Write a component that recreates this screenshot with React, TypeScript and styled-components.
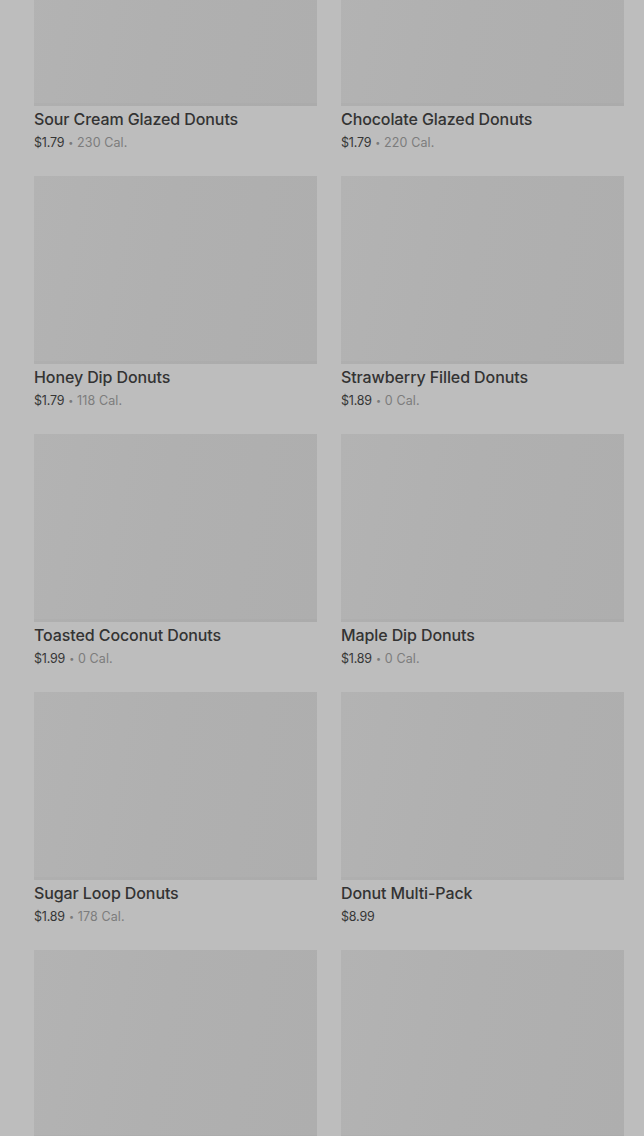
import React, { FC } from 'react';
import styled, { createGlobalStyle } from 'styled-components';

const GlobalStyle = createGlobalStyle`
    html,
    body {
        margin: 0;
        padding: 0;
        background: #bdbdbd;
        overflow: hidden;
    }

    body {
        font-family: Inter, 'Liberation Sans', sans-serif;
        -webkit-font-smoothing: antialiased;
    }
`;

interface Item {
    id: number;
    name?: string;
    price?: string;
    cal?: string;
}

const items: Item[] = [
    { id: 1, name: 'Sour Cream Glazed Donuts', price: '$1.79', cal: '230 Cal.' },
    { id: 2, name: 'Chocolate Glazed Donuts', price: '$1.79', cal: '220 Cal.' },
    { id: 3, name: 'Honey Dip Donuts', price: '$1.79', cal: '118 Cal.' },
    { id: 4, name: 'Strawberry Filled Donuts', price: '$1.89', cal: '0 Cal.' },
    { id: 5, name: 'Toasted Coconut Donuts', price: '$1.99', cal: '0 Cal.' },
    { id: 6, name: 'Maple Dip Donuts', price: '$1.89', cal: '0 Cal.' },
    { id: 7, name: 'Sugar Loop Donuts', price: '$1.89', cal: '178 Cal.' },
    { id: 8, name: 'Donut Multi-Pack', price: '$8.99' },
    { id: 9 },
    { id: 10 },
];

const Page = styled.div`
    height: 1136px;
    overflow: hidden;
    background: #bdbdbd;
`;

const Grid = styled.div`
    display: grid;
    grid-template-columns: 283px 283px;
    column-gap: 24px;
    row-gap: 23px;
    padding: 0 20px 0 34px;
    margin-top: -82px;
`;

const Card = styled.div`
    display: flex;
    flex-direction: column;
`;

const Thumb = styled.div`
    height: 188px;
    background: linear-gradient(100deg, #b3b3b3 0%, #b0b0b0 45%, #aeaeae 100%);
    box-shadow: inset 0 -3px 0 rgba(0, 0, 0, 0.015);
`;

const Title = styled.div`
    margin-top: 3px;
    font-size: 16px;
    line-height: 20px;
    font-weight: 500;
    color: #333333;
    letter-spacing: -0.1px;
`;

const Meta = styled.div`
    margin-top: 4px;
    display: flex;
    align-items: center;
    font-size: 12.5px;
    line-height: 20px;
    color: #363636;
    letter-spacing: -0.2px;
`;

const Dot = styled.span`
    margin: 0 4px;
    font-size: 9px;
    color: #7a7a7a;
`;

const Cal = styled.span`
    color: #7c7c7c;
    letter-spacing: 0.1px;
`;

const ProductCard: FC<Item> = ({ name, price, cal }) => (
    <Card>
        <Thumb />
        {name && (
            <>
                <Title>{name}</Title>
                <Meta>
                    {price}
                    {cal && (
                        <>
                            <Dot>•</Dot>
                            <Cal>{cal}</Cal>
                        </>
                    )}
                </Meta>
            </>
        )}
    </Card>
);

const App: FC = () => (
    <Page>
        <GlobalStyle />
        <Grid>
            {items.map((item) => (
                <ProductCard key={item.id} {...item} />
            ))}
        </Grid>
    </Page>
);

export default App;
